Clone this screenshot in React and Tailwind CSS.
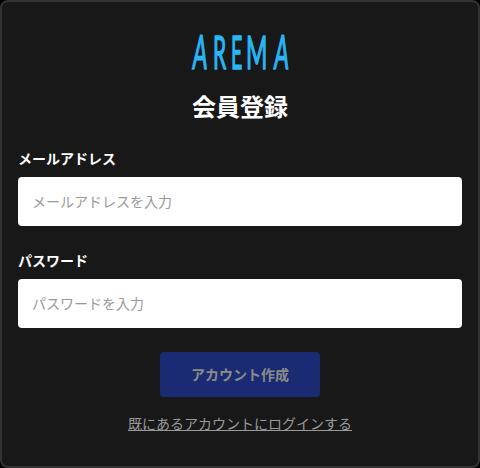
const LETTERS = [
  { char: 'A', transform: 'matrix(0.46 0 -0.06 1 2 36.2)' },
  { char: 'R', transform: 'matrix(0.45 0 0 1 23 36.2)' },
  { char: 'E', transform: 'matrix(0.42 0 0 1 41 36.2)' },
  { char: 'M', transform: 'matrix(0.49 0 0 1 56 36.2)' },
  { char: 'A', transform: 'matrix(0.46 0 -0.06 1 83.5 36.2)' },
];

function Logo() {
  return (
    <svg
      width="100"
      height="40"
      viewBox="0 0 100 40"
      role="img"
      aria-label="AREMA"
      className="block overflow-visible fill-[#29b6f6] stroke-[#29b6f6] font-['Lato',sans-serif] text-[47px] font-normal"
      strokeWidth="1.5"
      strokeLinejoin="round"
    >
      {LETTERS.map((letter, i) => (
        <text key={i} transform={letter.transform}>
          {letter.char}
        </text>
      ))}
    </svg>
  );
}

function Field({ label, type, placeholder }) {
  return (
    <label className="flex flex-col gap-[9px]">
      <span className="text-sm leading-5 font-bold">{label}</span>
      <input
        type={type}
        placeholder={placeholder}
        className="h-[49px] w-full rounded bg-white px-3.5 pb-0.5 text-sm text-[#333] placeholder:text-[#999] outline-none"
      />
    </label>
  );
}

export default function App() {
  return (
    <div className="h-[468px] w-[480px] bg-black">
      <main className="flex h-full flex-col rounded-[8px] border-2 border-[#333] bg-[#181818] px-4 pt-[31px] font-['Noto_Sans_CJK_JP',sans-serif] text-white">
        <div className="flex justify-center">
          <Logo />
        </div>
        <h1 className="mt-[15px] text-center text-2xl leading-9 font-bold">会員登録</h1>
        <form className="mt-6 flex flex-col">
          <div className="flex flex-col gap-6">
            <Field label="メールアドレス" type="email" placeholder="メールアドレスを入力" />
            <Field label="パスワード" type="password" placeholder="パスワードを入力" />
          </div>
          <button type="button" className="mt-6 h-[45px] w-40 self-center rounded bg-[#1a2b73] pb-0.5 text-sm font-bold text-[#8b8b8b]">
            アカウント作成
          </button>
          <a href="#" className="mt-4 self-center text-sm leading-[21px] text-[#999] underline">
            既にあるアカウントにログインする
          </a>
        </form>
      </main>
    </div>
  );
}
